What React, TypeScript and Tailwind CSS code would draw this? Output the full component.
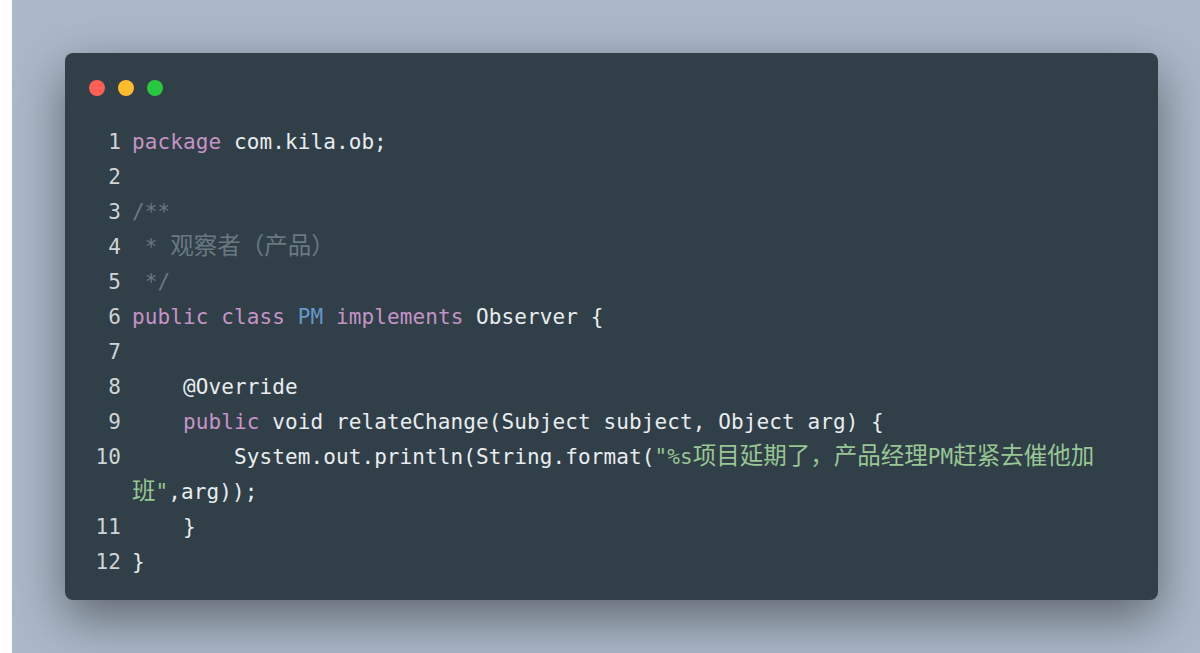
import React from "react";

// Token colours — Oceanic-ish palette used by the snippet
const C = {
  kw: "text-[#c594c5]",
  type: "text-[#6699cc]",
  str: "text-[#99c794]",
  cm: "text-[#6b7983]",
};

type Tok = { t: string; c?: string; cjk?: boolean };

const LINES: Tok[][] = [
  [{ t: "package", c: C.kw }, { t: " com.kila.ob;" }],
  [],
  [{ t: "/**", c: C.cm }],
  [
    { t: " * ", c: C.cm },
    { t: "观察者（产品）", c: C.cm, cjk: true },
  ],
  [{ t: " */", c: C.cm }],
  [
    { t: "public", c: C.kw },
    { t: " " },
    { t: "class", c: C.kw },
    { t: " " },
    { t: "PM", c: C.type },
    { t: " " },
    { t: "implements", c: C.kw },
    { t: " Observer {" },
  ],
  [],
  [{ t: "    @Override" }],
  [
    { t: "    " },
    { t: "public", c: C.kw },
    { t: " void relateChange(Subject subject, Object arg) {" },
  ],
  [
    { t: "        System.out.println(String.format(" },
    { t: "\"%s", c: C.str },
    { t: "项目延期了，产品经理", c: C.str, cjk: true },
    { t: "PM", c: C.str },
    { t: "赶紧去催他加班", c: C.str, cjk: true },
    { t: "\"", c: C.str },
    { t: ",arg));" },
  ],
  [{ t: "    }" }],
  [{ t: "}" }],
];

function Dot({ color }: { color: string }) {
  return <span className={`block h-[16px] w-[16px] rounded-full ${color}`} />;
}

function CodeLine({ n, toks }: { n: number; toks: Tok[] }) {
  return (
    <div className="flex">
      <span className="w-[67px] shrink-0 pr-[11px] text-right text-[#cfd4d8]">{n}</span>
      <span className="min-w-0 flex-1 whitespace-pre-wrap text-[#e9ecee]">
        {toks.length === 0 ? " " : null}
        {toks.map((tok, i) =>
          tok.cjk ? (
            <span
              key={i}
              className={`${tok.c ?? ""} text-[23.5px] leading-none tracking-normal`}
              style={{ fontFamily: '"Noto Sans CJK SC", sans-serif' }}
            >
              {tok.t}
            </span>
          ) : (
            <span key={i} className={tok.c}>
              {tok.t}
            </span>
          )
        )}
      </span>
    </div>
  );
}

export default function App() {
  return (
    <div className="flex h-[653px] w-[1200px] overflow-hidden bg-white">
      <div className="w-[12px] shrink-0 bg-white" />
      <div className="flex-1 bg-[#abb8c8] pl-[53px] pt-[53px]">
        <div className="h-[547px] w-[1093px] rounded-[8px] bg-[#303f48] pb-[21px] pr-[48px] pt-[80px] shadow-[0_18px_50px_rgba(0,0,0,0.45)]">
          {/* Window controls */}
          <div className="-mt-[53px] mb-[29px] flex gap-[13px] pl-[24px]">
            <Dot color="bg-[#ff5f56]" />
            <Dot color="bg-[#ffbd2e]" />
            <Dot color="bg-[#27c93f]" />
          </div>

          <div
            className="text-[21px] leading-[35px] tracking-[0.1px]"
            style={{ fontFamily: '"DejaVu Sans Mono", "Noto Sans CJK SC", monospace' }}
          >
            {LINES.map((toks, i) => (
              <CodeLine key={i} n={i + 1} toks={toks} />
            ))}
          </div>
        </div>
      </div>
    </div>
  );
}
